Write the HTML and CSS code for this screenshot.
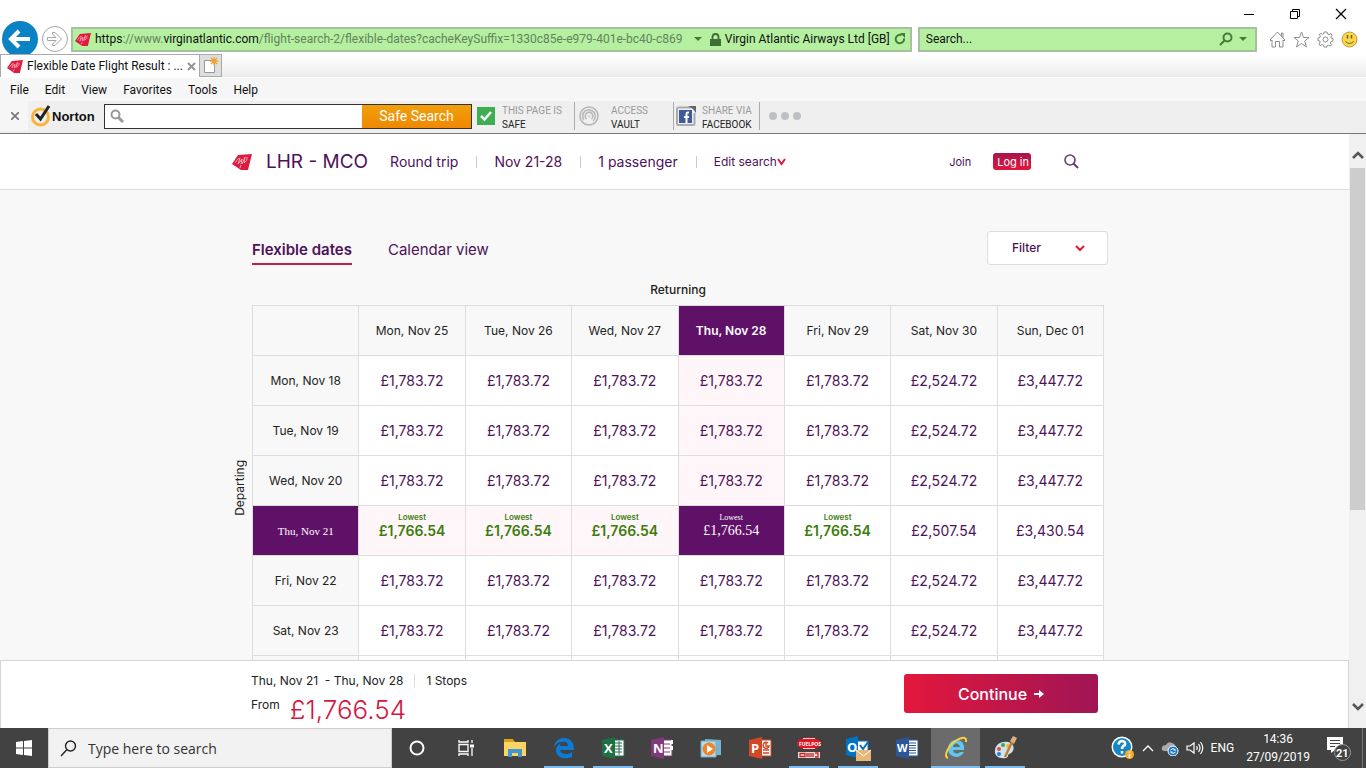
FILE: index.html
```html
<!DOCTYPE html>
<html lang="en">
<head>
    <meta charset="UTF-8">
    <meta name="viewport" content="width=device-width, initial-scale=1.0">
    <title>Flexible Date Flight Result</title>
    <link rel="stylesheet" href="styles.css">
</head>
<body>
    <svg class="defs" aria-hidden="true">
        <symbol id="virgin" viewBox="0 0 20 16">
            <path d="M6 1L20 0L16 16L9 16L0 10Z" fill="#dc1b3f"/>
            <path d="M3 9Q6 4 8 4L6 10L10 5L9 10M10 10L13 3L12 9Q16 7 15 3M9 11L8 14" fill="none" stroke="#fbb3c0" stroke-width="0.900"/>
        </symbol>
    </svg>

    <div class="browser">
        <div class="titlebar">
            <button aria-label="Minimize"><svg width="12" height="12"><path d="M1 6.5H11" stroke="#000"/></svg></button>
            <button aria-label="Restore"><svg width="12" height="12" fill="none" stroke="#000"><path d="M1.5 3.5H8.500V10.500H1.500Z M3.500 3V1.500H10.500V8.500H9"/></svg></button>
            <button aria-label="Close"><svg width="12" height="12"><path d="M1 1L11 11M11 1L1 11" stroke="#000" stroke-width="1.200"/></svg></button>
        </div>

        <div class="nav">
            <button class="back" aria-label="Back"><svg width="38" height="38"><circle cx="19" cy="19" r="18" fill="#0a82c4"/><path d="M29 19H12M18 11L10 19L18 27" fill="none" stroke="#fff" stroke-width="4"/></svg></button>
            <button class="forward" aria-label="Forward"><svg width="26" height="26" fill="none" stroke="#a5a5a5"><circle cx="13" cy="13" r="12.500"/><path d="M5.500 11.500H14L10.500 8V6.500H13L19.500 13L13 19.500H10.500V18L14 14.500H5.500Z"/></svg></button>
            <div class="address">
                <svg width="16" height="13"><use href="#virgin"/></svg>
                <div class="url" role="textbox" aria-label="Address"><b>https</b>://www.<b>virginatlantic.com</b>/flight-search-2/flexible-dates?cacheKeySuffix=1330c85e-e979-401e-bc40-c869</div>
                <svg width="8" height="5"><path d="M0 0H8L4 4Z" fill="#457a3a"/></svg>
                <svg class="lock" width="11" height="13"><path d="M0 6H11V13H0Z" fill="#3f6d35"/><path d="M2.500 6V4A3 3 0 0 1 8.500 4V6" fill="none" stroke="#3f6d35" stroke-width="1.800"/></svg>
                <span class="owner">Virgin Atlantic Airways Ltd [GB]</span>
                <button aria-label="Refresh"><svg width="12" height="12"><path d="M10 5.500A4.200 4.200 0 1 1 7.500 2.200" fill="none" stroke="#457a3a" stroke-width="2"/><path d="M6 0L11 0V5Z" fill="#457a3a"/></svg></button>
            </div>
            <div class="websearch">
                <input type="text" aria-label="Search the web" placeholder="Search...">
                <svg width="14" height="14" fill="none" stroke="#457a3a" stroke-width="2"><circle cx="8.500" cy="5.500" r="4"/><path d="M5.500 8.500L1 13"/></svg>
                <svg width="8" height="5"><path d="M0 0H8L4 4Z" fill="#457a3a"/></svg>
            </div>
            <div class="tools">
                <button aria-label="Home"><svg width="17" height="17" fill="none" stroke="#8e8e8e"><path d="M1 9L8.500 1L16 9L15 10L14 9V16H10.500V10.500H6.500V16H3V9L2 10Z"/><path d="M12.500 5V2H14V6.500"/></svg></button>
                <button aria-label="Favorites"><svg width="17" height="17" fill="none" stroke="#8e8e8e"><path d="M8.500 1L10.500 6.500H16L11.700 10L13.500 16L8.500 12.500L3.500 16L5.300 10L1 6.500H6.500Z"/></svg></button>
                <button aria-label="Tools"><svg width="17" height="17" fill="none" stroke="#8e8e8e"><path d="M7 1H10L10.500 3L12 3.700L14 2.500L15 4.500L13.800 6L14 7L16 7.500V10L14 10.500L13.500 12L14.500 14L13 15L11.500 14L10 14.500V16H7L6.500 14L5 13.500L3 14.700L2 13L3.200 11L2.800 10L1 9.500V7L2.800 6.500L3.300 5L2.200 3.500L4 2.300L5.500 3.300L6.600 3Z"/><circle cx="8.500" cy="8.500" r="2.500"/></svg></button>
                <button aria-label="Feedback"><svg width="17" height="17"><circle cx="8.500" cy="8.500" r="7.500" fill="#fcd64a" stroke="#b79a3c"/><path d="M6.500 4V7.500M10.500 4V7.500" stroke="#6d5a1e" stroke-width="1.500"/><path d="M4.500 10.500Q8.500 14.500 12.500 10.500" fill="none" stroke="#6d5a1e"/></svg></button>
            </div>
        </div>

        <div class="tabs">
            <div class="tab">
                <svg width="16" height="13"><use href="#virgin"/></svg>
                <span>Flexible Date Flight Result : ...</span>
                <button aria-label="Close tab"><svg width="9" height="9"><path d="M1 1L8 8M8 1L1 8" stroke="#949494" stroke-width="2"/></svg></button>
            </div>
            <button class="newtab" aria-label="New tab"><svg width="16" height="17"><path d="M1.500 3.500H11.500V15.500H1.500Z" fill="#fff" stroke="#999"/><path d="M11 0V8M7 4H15M8 1L14 7M14 1L8 7" stroke="#f0a328" stroke-width="1.300"/></svg></button>
        </div>

        <nav class="menu">
            <a href="#">File</a>
            <a href="#">Edit</a>
            <a href="#">View</a>
            <a href="#">Favorites</a>
            <a href="#">Tools</a>
            <a href="#">Help</a>
        </nav>

        <div class="toolbar">
            <button class="close" aria-label="Close toolbar"><svg width="8" height="8"><path d="M0 0L8 8M8 0L0 8" stroke="#777" stroke-width="1.700"/></svg></button>
            <div class="norton">
                <svg width="21" height="22" fill="none"><circle cx="9.500" cy="12" r="8" stroke="#f8b53d" stroke-width="3"/><path d="M5 9L9.500 14L18 1" stroke="#222" stroke-width="3"/></svg>
                <span>Norton</span>
            </div>
            <div class="safesearch">
                <svg width="14" height="14" fill="none" stroke="#999"><circle cx="5.500" cy="5.500" r="4" stroke-width="2"/><path d="M8.500 8.500L13 13" stroke-width="3"/></svg>
                <input type="text" aria-label="Safe Search">
                <button>Safe Search</button>
            </div>
            <div class="widget safe">
                <svg width="18" height="18"><path d="M0 0H18V18H0Z" fill="#3fae52"/><path d="M4 9L7.500 12.500L14 5" fill="none" stroke="#fff" stroke-width="2.500"/></svg>
                <p>THIS PAGE IS<br><b>SAFE</b></p>
            </div>
            <div class="widget vault">
                <svg width="20" height="20" fill="none" stroke="#b5b5b5" stroke-width="1.500"><circle cx="10" cy="10" r="9"/><path d="M5 14A6.300 6.300 0 1 1 14 15M7.500 13A3.800 3.800 0 1 1 12.500 13M10 9.500V11"/></svg>
                <p>ACCESS<br><b>VAULT</b></p>
            </div>
            <div class="widget share">
                <svg width="20" height="20"><path d="M15 1.500H2Q1 1.500 1 3V18Q1 19 2 19H17Q18.500 19 18.500 18V7" fill="none" stroke="#a9abb0" stroke-width="2"/><path d="M12 0H20V7L17 3Z" fill="#666"/><path d="M3 4H16V17H3Z" fill="#3f5b9a"/><path d="M13 6.500H11.500Q10.500 6.500 10.500 8V17M8 11H13" fill="none" stroke="#fff" stroke-width="2"/></svg>
                <p>SHARE VIA<br><b>FACEBOOK</b></p>
            </div>
            <button class="more" aria-label="More"><svg width="32" height="8" fill="#bcc1c7"><circle cx="4" cy="4" r="4"/><circle cx="16" cy="4" r="4"/><circle cx="28" cy="4" r="4"/></svg></button>
        </div>
    </div>

    <div class="viewport">
        <div class="page">
            <header class="site-header">
                <div class="header-inner">
                    <a class="logo" href="#" aria-label="Virgin Atlantic"><svg width="20" height="16"><use href="#virgin"/></svg></a>
                    <h1>LHR - MCO</h1>
                    <ul class="trip">
                        <li>Round trip</li>
                        <li>Nov 21-28</li>
                        <li>1 passenger</li>
                        <li><button class="edit">Edit search<svg width="9" height="8"><path d="M1 1L4.500 6L8 1" fill="none" stroke="#e0173c" stroke-width="2"/></svg></button></li>
                    </ul>
                    <div class="account">
                        <a href="#">Join</a>
                        <button class="login">Log in</button>
                        <button class="find" aria-label="Search"><svg width="15" height="15" fill="none" stroke="#6b3a78" stroke-width="1.600"><circle cx="6" cy="6" r="5"/><path d="M9.500 9.500L14 14" stroke-width="2"/></svg></button>
                    </div>
                </div>
            </header>

            <main>
                <div class="results">
                    <div class="views">
                        <a class="active" href="#">Flexible dates</a>
                        <a href="#">Calendar view</a>
                        <button class="filter">Filter<svg width="10" height="7"><path d="M1 1L5 5L9 1" fill="none" stroke="#e0173c" stroke-width="2"/></svg></button>
                    </div>
                    <div class="returning">Returning</div>
                    <div class="matrix">
                        <div class="departing"><span>Departing</span></div>
                        <table>
                            <thead>
                                <tr><td></td><th>Mon, Nov 25</th><th>Tue, Nov 26</th><th>Wed, Nov 27</th><th class="picked">Thu, Nov 28</th><th>Fri, Nov 29</th><th>Sat, Nov 30</th><th>Sun, Dec 01</th></tr>
                            </thead>
                            <tbody>
                                <tr>
                                    <th>Mon, Nov 18</th>
                                    <td><button>£1,783.72</button></td>
                                    <td><button>£1,783.72</button></td>
                                    <td><button>£1,783.72</button></td>
                                    <td class="tint"><button>£1,783.72</button></td>
                                    <td><button>£1,783.72</button></td>
                                    <td><button>£2,524.72</button></td>
                                    <td><button>£3,447.72</button></td>
                                </tr>
                                <tr>
                                    <th>Tue, Nov 19</th>
                                    <td><button>£1,783.72</button></td>
                                    <td><button>£1,783.72</button></td>
                                    <td><button>£1,783.72</button></td>
                                    <td class="tint"><button>£1,783.72</button></td>
                                    <td><button>£1,783.72</button></td>
                                    <td><button>£2,524.72</button></td>
                                    <td><button>£3,447.72</button></td>
                                </tr>
                                <tr>
                                    <th>Wed, Nov 20</th>
                                    <td><button>£1,783.72</button></td>
                                    <td><button>£1,783.72</button></td>
                                    <td><button>£1,783.72</button></td>
                                    <td class="tint"><button>£1,783.72</button></td>
                                    <td><button>£1,783.72</button></td>
                                    <td><button>£2,524.72</button></td>
                                    <td><button>£3,447.72</button></td>
                                </tr>
                                <tr>
                                    <th class="picked serif">Thu, Nov 21</th>
                                    <td class="low tint"><button><small>Lowest</small>£1,766.54</button></td>
                                    <td class="low tint"><button><small>Lowest</small>£1,766.54</button></td>
                                    <td class="low tint"><button><small>Lowest</small>£1,766.54</button></td>
                                    <td class="low picked serif"><button><small>Lowest</small>£1,766.54</button></td>
                                    <td class="low"><button><small>Lowest</small>£1,766.54</button></td>
                                    <td><button>£2,507.54</button></td>
                                    <td><button>£3,430.54</button></td>
                                </tr>
                                <tr>
                                    <th>Fri, Nov 22</th>
                                    <td><button>£1,783.72</button></td>
                                    <td><button>£1,783.72</button></td>
                                    <td><button>£1,783.72</button></td>
                                    <td><button>£1,783.72</button></td>
                                    <td><button>£1,783.72</button></td>
                                    <td><button>£2,524.72</button></td>
                                    <td><button>£3,447.72</button></td>
                                </tr>
                                <tr>
                                    <th>Sat, Nov 23</th>
                                    <td><button>£1,783.72</button></td>
                                    <td><button>£1,783.72</button></td>
                                    <td><button>£1,783.72</button></td>
                                    <td><button>£1,783.72</button></td>
                                    <td><button>£1,783.72</button></td>
                                    <td><button>£2,524.72</button></td>
                                    <td><button>£3,447.72</button></td>
                                </tr>
                                <tr><th></th><td></td><td></td><td></td><td></td><td></td><td></td><td></td></tr>
                            </tbody>
                        </table>
                    </div>
                </div>
            </main>

            <footer class="summary">
                <div class="summary-inner">
                    <div>
                        <p class="route"><span>Thu, Nov 21 &nbsp;- Thu, Nov 28</span><span>1 Stops</span></p>
                        <p class="total">From <strong>£1,766.54</strong></p>
                    </div>
                    <button class="continue">Continue <svg width="10" height="8"><path d="M0 4H6" stroke="#fff" stroke-width="2"/><path d="M5 0L10 4L5 8Z" fill="#fff"/></svg></button>
                </div>
            </footer>
        </div>
        <div class="scrollbar">
            <svg width="12" height="8"><path d="M1 7L6 2L11 7" fill="none" stroke="#555" stroke-width="2.500"/></svg>
            <div class="thumb"></div>
            <svg width="12" height="8"><path d="M1 1L6 6L11 1" fill="none" stroke="#555" stroke-width="2.500"/></svg>
        </div>
    </div>

    <div class="taskbar">
        <button class="start" aria-label="Start"><svg width="16" height="16" fill="#fff"><path d="M0 2L7 1V7.500H0ZM8 1L16 0V7.500H8ZM0 8.500H7V15L0 14ZM8 8.500H16V16L8 15Z"/></svg></button>
        <label class="cortana">
            <svg width="17" height="17" fill="none" stroke="#222" stroke-width="1.400"><circle cx="10.500" cy="6" r="5"/><path d="M7 9.500L1 16"/></svg>
            <input type="text" aria-label="Type here to search" placeholder="Type here to search">
        </label>
        <div class="apps">
            <button aria-label="Cortana"><svg width="18" height="18"><circle cx="9" cy="9" r="6.500" fill="none" stroke="#fff" stroke-width="2"/></svg></button>
            <button aria-label="Task view"><svg width="18" height="18" fill="none" stroke="#fff" stroke-width="1.300"><path d="M2 1V3H11V1M2 5.500H11V12.500H2ZM2 17V15H11V17M15 1V4M15 9V17"/><path d="M13 5.500H17V8.500H13Z" fill="#fff" stroke="none"/></svg></button>
            <button aria-label="File Explorer"><svg width="22" height="20"><path d="M0 2H9L11 4H22V18H0Z" fill="#fcd462"/><path d="M0 1H9L10 4H0Z" fill="#d9a116"/><path d="M4 11H18V19H14V15H8V19H4Z" fill="#3f97d3"/></svg></button>
            <button class="open" aria-label="Edge"><svg width="22" height="22"><path d="M1 10C2 3 7 1 11 1C18 1 21 6 21 13H7C8 18 15 18 19 15V20C12 23 3 21 3 13C3 9 6 7 9 6C7 7 7 8 7 9H15C15 5 12 4 9 5C5 5 3 7 1 10Z" fill="#0c7bd8"/></svg></button>
            <button class="open" aria-label="Excel"><svg width="24" height="22"><path d="M12 3H23V19H12Z" fill="#fff" stroke="#217346"/><path d="M14 6H21M14 9H21M14 12H21M14 15H21M18 4V18" stroke="#217346"/><path d="M1 3L14 0V22L1 19Z" fill="#1d7044"/><text x="3" y="16">X</text></svg></button>
            <button aria-label="OneNote"><svg width="24" height="22"><path d="M12 3H22V19H12Z" fill="#fff" stroke="#80397b"/><path d="M14 7H20M14 11H20M14 15H20" stroke="#80397b"/><path d="M21 3H23V7H21ZM21 9H23V13H21Z" fill="#fff"/><path d="M1 3L14 0V22L1 19Z" fill="#80397b"/><text x="3" y="16">N</text></svg></button>
            <button aria-label="Media Player"><svg width="22" height="20"><path d="M5 1L21 2V17L5 18Z" fill="#79b4d2"/><path d="M1 3H16V19H1Z" fill="#b7dcec" stroke="#6ea9c7"/><circle cx="9" cy="11" r="6.500" fill="#ee852b"/><path d="M7 7L13 11L7 15Z" fill="#fff"/></svg></button>
            <button aria-label="PowerPoint"><svg width="24" height="22"><path d="M12 3H23V19H12Z" fill="#fff" stroke="#d24726"/><path d="M20 6A3 3 0 1 0 21 9H18V6M15 13H21M15 16H21" fill="none" stroke="#d24726" stroke-width="1.500"/><path d="M1 3L14 0V22L1 19Z" fill="#d24726"/><text x="3" y="16">P</text></svg></button>
            <button class="open" aria-label="Fuelpos"><svg width="24" height="22"><ellipse cx="12" cy="6.500" rx="12" ry="6" fill="#e01822"/><path d="M6 1.500H18M6 11.500H18" stroke="#f6c8c8"/><path d="M1 15H23V21H1Z" fill="#f3dcd3"/><text class="tiny" x="2" y="9">FUELPOS</text><path d="M3 16.500H8V19.500H3ZM10 16V20M12 16V20M14 16V20M16 16V20M18 16H21V20H18" fill="none" stroke="#c2272d" stroke-width="1.300"/></svg></button>
            <button class="open" aria-label="Outlook"><svg width="26" height="25"><path d="M12 5H23V17H12Z" fill="#fff" stroke="#0072c6"/><path d="M15 9L18 13L23 6" fill="none" stroke="#0072c6" stroke-width="2"/><path d="M1 3L13 0V22L1 19Z" fill="#0072c6"/><text x="2" y="16">O</text><path d="M11 14H26V25H11Z" fill="#e8b777"/><path d="M11 14L18.500 20L26 14" fill="none" stroke="#fff"/></svg></button>
            <button aria-label="Word"><svg width="24" height="22"><path d="M12 3H23V19H12Z" fill="#fff" stroke="#2b579a"/><path d="M14 6H21M14 8.500H21M14 11H21M14 13.500H21M14 16H21" stroke="#2b579a"/><path d="M1 3L14 0V22L1 19Z" fill="#2b579a"/><text x="2" y="15" class="w">W</text></svg></button>
            <button class="open current" aria-label="Internet Explorer"><svg width="24" height="24"><path d="M20 16Q17 21 12 21Q4 20 4 12.500Q5 4 12 4Q21 4 20 14H9Q9.500 17.500 13 17.500Q15 17.500 16 16ZM9 11H16Q15 7.500 12.500 7.500Q9.500 7.500 9 11Z" fill="#5fc8f1" fill-rule="evenodd"/><path d="M4 22C-1 21 4 10 12 4.500C18 1 23 0 22 6" fill="none" stroke="#fbd13b" stroke-width="2"/></svg></button>
            <button class="open" aria-label="Paint"><svg width="24" height="24"><path d="M2 14C3 6 12 4 18 7C23 11 20 17 16 18C14 20 16 21 13 22C6 23 1 20 2 14Z" fill="#cfe3ef"/><circle cx="6" cy="13" r="2" fill="#e24b3c"/><circle cx="10" cy="9" r="2" fill="#46a657"/><circle cx="6" cy="18" r="2" fill="#2a7ec6"/><circle cx="15" cy="10" r="2" fill="#f3c02d"/><path d="M12 21L19 6" stroke="#c67c35" stroke-width="2.500"/><path d="M17 5L20 0L24 2L21 8Z" fill="#dfae77"/></svg></button>
        </div>
        <div class="tray">
            <button aria-label="Help"><svg width="24" height="24"><circle cx="11" cy="11" r="10.500" fill="#fff"/><circle cx="11" cy="11" r="9" fill="#1686c4"/><path d="M7.500 8.500Q8 5 11 5Q15 5.500 14 9Q11 10 11 13M11 15V17.500" fill="none" stroke="#fff" stroke-width="2.500"/><circle cx="18.500" cy="18.500" r="4.500" fill="#f3ae2a"/><path d="M18.500 15.500V16.500M18.500 18V22" stroke="#fff" stroke-width="1.500"/></svg></button>
            <button aria-label="Hidden icons"><svg width="12" height="8"><path d="M1 7L6 2L11 7" fill="none" stroke="#fff" stroke-width="1.300"/></svg></button>
            <button aria-label="OneDrive"><svg width="18" height="16"><path d="M3 11Q0 10 1 7Q2 5 5 5Q7 1 11 3Q15 4 15 9L8 11Z" fill="#ababab"/><circle cx="12" cy="11" r="5" fill="#1777c4" stroke="#fff"/><path d="M9.500 10Q12 7 14.500 10H12.500M14.500 12Q12 15 9.500 12H11.500" fill="none" stroke="#fff"/></svg></button>
            <button aria-label="Volume"><svg width="18" height="16" fill="none" stroke="#fff" stroke-width="1.200"><path d="M1 6H4L8 3V13L4 10H1ZM10.500 6Q12 8 10.500 10M12.500 4Q15.500 8 12.500 12M14.500 2Q19 8 14.500 14"/></svg></button>
            <span class="lang">ENG</span>
            <span class="clock">14:36<br>27/09/2019</span>
            <button aria-label="Notifications"><svg width="26" height="26"><path d="M1 2H17V15H9L5 18V15H1Z" fill="#fff"/><path d="M4 5.500H14M4 8.500H14M4 11.500H9" stroke="#444"/><circle cx="16.500" cy="17.500" r="8" fill="#424242" stroke="#999"/><text class="count" x="10" y="22">21</text></svg></button>
        </div>
    </div>
</body>
</html>
```
FILE: styles.css
```css
* {
    box-sizing: border-box;
}
body {
    margin: 0;
    height: 100vh;
    display: flex;
    flex-direction: column;
    overflow: hidden;
    font-family: Inter, "Liberation Sans", sans-serif;
    background: #fff;
    color: #222;
}
.defs {
    display: none;
}
svg {
    flex: none;
    display: block;
}
a {
    color: inherit;
    text-decoration: none;
}
p, h1, ul {
    margin: 0;
    padding: 0;
}
button, input {
    font: inherit;
    color: inherit;
    border: 0;
    padding: 0;
    background: none;
}
button {
    cursor: pointer;
}
input {
    min-width: 0;
    outline: none;
}
input::placeholder {
    color: inherit;
    opacity: 1;
}

/* browser window */
.browser {
    font-family: Roboto, "Open Sans", sans-serif;
    font-size: 12px;
    color: #111;
}
.titlebar {
    height: 20px;
    padding-right: 19px;
    display: flex;
    justify-content: flex-end;
    align-items: flex-end;
    gap: 34px;
}
.nav {
    height: 38px;
    padding: 0 8px 0 1px;
    display: flex;
    align-items: center;
}
.forward {
    margin: 0 3px;
}
.address, .websearch {
    height: 25px;
    min-width: 0;
    display: flex;
    align-items: center;
    background: #b4f0a0;
    border: 2px solid #a8bfa2;
}
.address {
    flex: 1;
    gap: 4px;
    padding: 0 4px 0 2px;
}
.url {
    flex: 1;
    min-width: 0;
    overflow: hidden;
    white-space: nowrap;
    color: #65815d;
}
.url b {
    font-weight: normal;
    color: #111;
}
.lock {
    margin-left: 4px;
}
.owner {
    white-space: nowrap;
}
.websearch {
    width: 25%;
    margin-left: 6px;
    padding: 0 8px 0 6px;
    gap: 6px;
}
.websearch input {
    flex: 1;
}
.tools {
    display: flex;
    gap: 7px;
    margin-left: 12px;
}
.tabs {
    position: relative;
    height: 24px;
    margin-top: -4px;
    display: flex;
    background: linear-gradient(to bottom, rgba(255, 255, 255, 0), #ececec);
    border-bottom: 1px solid #fff;
}
.tab {
    width: 200px;
    padding: 0 9px 0 6px;
    display: flex;
    align-items: center;
    gap: 4px;
    background: #fff;
    border: 1px solid #aaa;
    border-bottom: 0;
}
.tab span {
    flex: 1;
    white-space: nowrap;
}
.newtab {
    width: 22px;
    padding-left: 3px;
    background: #dedede;
    border: 1px solid #aaa;
    border-left: 0;
}
.menu {
    height: 23px;
    padding-left: 10px;
    display: flex;
    align-items: center;
    gap: 16px;
    background: #f6f6f6;
}
.toolbar {
    height: 33px;
    padding-bottom: 2px;
    display: flex;
    align-items: center;
    background: #efefef;
    border-bottom: 1px solid #777;
}
.toolbar .close {
    width: 28px;
    align-self: stretch;
    padding-left: 11px;
    background: #f6f6f6;
}
.norton {
    width: 76px;
    padding-left: 3px;
    display: flex;
    align-items: center;
    font: bold 13px "Liberation Sans", sans-serif;
}
.safesearch {
    width: 368px;
    height: 25px;
    display: flex;
    align-items: center;
    padding-left: 5px;
    background: #fff;
    border: 1px solid #333;
}
.safesearch input {
    flex: 1;
}
.safesearch button {
    width: 109px;
    align-self: stretch;
    font-size: 14px;
    color: #fff;
    background: linear-gradient(#f0a00c, #f08800);
}
.widget {
    height: 28px;
    display: flex;
    align-items: center;
    font-size: 10px;
    line-height: 14px;
    color: #999;
    border-right: 1px solid #aaa;
}
.widget p {
    padding-top: 3px;
}
.widget b {
    font-weight: normal;
    color: #222;
}
.safe {
    width: 103px;
    padding-left: 5px;
    gap: 7px;
}
.vault {
    width: 99px;
    padding-left: 4px;
    gap: 12px;
}
.share {
    width: 86px;
    padding-left: 2px;
    gap: 6px;
}
.more {
    margin-left: 9px;
}

/* page */
.viewport {
    flex: 1;
    min-height: 0;
    display: flex;
}
.page {
    flex: 1;
    min-width: 0;
    display: flex;
    flex-direction: column;
    background: #f8f8f8;
}
.site-header {
    background: #fff;
    border-bottom: 1px solid #ddd;
    color: #4d1259;
}
.header-inner, .results, .summary-inner {
    max-width: 885px;
    margin: 0 auto;
}
.header-inner {
    height: 55px;
    display: flex;
    align-items: center;
}
.site-header h1 {
    margin: 0 22px 0 14px;
    font-size: 19px;
    font-weight: normal;
}
.trip {
    display: flex;
    align-items: center;
    list-style: none;
    font-size: 14px;
}
.trip li {
    display: flex;
    align-items: center;
}
.trip li + li::before {
    content: "";
    width: 1px;
    height: 12px;
    margin: 0 17px 0 18px;
    background: #ccc;
}
.edit {
    display: flex;
    align-items: center;
    font-size: 12px;
}
.account {
    margin-left: auto;
    padding-right: 38px;
    display: flex;
    align-items: center;
    font-size: 11px;
}
.login {
    height: 17px;
    margin: 0 33px 0 22px;
    padding: 0 2px 0 4px;
    border-radius: 3px;
    color: #fff;
    background: linear-gradient(#a8134e, #e0173c);
}
main {
    flex: 1;
    min-height: 0;
    overflow: hidden;
}
.results {
    padding-top: 41px;
}
.views {
    display: flex;
    align-items: center;
    gap: 36px;
    padding: 0 9px 0 20px;
    font-size: 15px;
    line-height: 18px;
    color: #4d1259;
}
.views a {
    padding: 10px 0 4px;
    border-bottom: 2px solid transparent;
}
.views .active {
    font-weight: 600;
    border-color: #c41e46;
}
.filter {
    width: 121px;
    height: 34px;
    margin-left: auto;
    padding: 0 22px 0 24px;
    display: flex;
    align-items: center;
    justify-content: space-between;
    font-size: 12px;
    font-weight: 500;
    background: #fff;
    border: 1px solid #ddd;
    border-radius: 3px;
}
.returning {
    margin: 17px 13px 7px 20px;
    font-size: 12px;
    line-height: 16px;
    font-weight: 500;
    text-align: center;
}
.matrix {
    display: flex;
    padding-right: 13px;
}
.departing {
    width: 20px;
    padding-bottom: 36px;
    display: flex;
    align-items: center;
    font-size: 12px;
}
.departing span {
    writing-mode: vertical-rl;
    transform: rotate(180deg);
}
table {
    flex: 1;
    width: 100%;
    table-layout: fixed;
    border-collapse: collapse;
    text-align: center;
}
th, td {
    height: 50px;
    padding: 0;
    border: 1px solid #ddd;
}
th {
    font-size: 12px;
    font-weight: normal;
}
tbody td {
    font-size: 14px;
    color: #4d1259;
    background: #fff;
}
td button {
    width: 100%;
}
tbody .tint {
    background: #fff6f9;
}
tbody .low {
    font-weight: 600;
    color: #3b7d0c;
}
.low small {
    display: block;
    font-size: 8px;
    line-height: 10px;
}
.low button {
    padding-bottom: 10px;
}
th.picked, tbody td.picked {
    color: #fff;
    font-weight: 600;
    background: #5f1168;
}
th.serif, tbody td.serif {
    font-family: "Liberation Serif", serif;
    font-weight: normal;
}
th.serif {
    font-size: 11px;
}
.summary {
    height: 68px;
    padding-top: 13px;
    background: #fff;
    border: 1px solid #d5d5d5;
    border-bottom: 0;
}
.summary-inner {
    padding: 0 19px;
    display: flex;
    justify-content: space-between;
    font-size: 12px;
}
.route {
    display: flex;
    align-items: center;
    line-height: 14px;
}
.route span + span {
    margin-left: 11px;
    padding-left: 11px;
    border-left: 1px solid #ddd;
}
.total {
    display: flex;
    gap: 10px;
    line-height: 16px;
    padding-top: 9px;
}
.total strong {
    font-size: 26px;
    line-height: 26px;
    font-weight: 300;
    color: #d5173f;
}
.continue {
    width: 194px;
    height: 39px;
    display: flex;
    align-items: center;
    justify-content: center;
    gap: 7px;
    font-size: 16px;
    font-weight: 500;
    color: #fff;
    background: linear-gradient(to right, #e3173c, #a01555);
    border-radius: 3px;
}
.scrollbar {
    width: 17px;
    padding: 17px 1px;
    display: flex;
    flex-direction: column;
    align-items: center;
    background: #f0f0f0;
}
.thumb {
    width: 100%;
    height: 61%;
    margin: 9px 0 auto;
    background: #cdcdcd;
}

/* taskbar */
.taskbar {
    height: 40px;
    display: flex;
    background: #424242;
    color: #fff;
    font-family: "Open Sans", sans-serif;
}
.start {
    width: 48px;
    padding-left: 16px;
}
.cortana {
    width: 344px;
    display: flex;
    align-items: center;
    gap: 11px;
    padding-left: 11px;
    font-size: 14px;
    color: #333;
    background: #f2f2f2;
    border: 1px solid #ccc;
}
.cortana input {
    flex: 1;
}
.apps {
    display: flex;
}
.apps button {
    width: 49px;
    display: flex;
    align-items: center;
    justify-content: center;
}
.apps .open {
    background: linear-gradient(#7cbcf0, #7cbcf0) center bottom / 40px 2px no-repeat;
}
.apps .current {
    background-color: #6b6b6b;
    background-size: 100% 2px;
}
.taskbar text {
    font-size: 13px;
    font-weight: bold;
    fill: #fff;
}
.taskbar .tiny {
    font-size: 5px;
}
.taskbar .w, .taskbar .count {
    font-size: 11px;
}
.tray {
    margin: 0 3px 0 auto;
    padding-right: 10px;
    display: flex;
    align-items: center;
    gap: 7px;
    font-family: Roboto, sans-serif;
    font-size: 12px;
    border-right: 1px solid #777;
}
.clock {
    margin: 0 9px 0 5px;
    line-height: 18px;
    text-align: center;
}
```
